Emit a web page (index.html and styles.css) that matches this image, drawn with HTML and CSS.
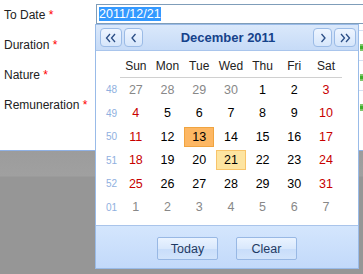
FILE: index.html
```html
<!DOCTYPE html>
<html lang="en">
<head>
  <meta charset="UTF-8" />
  <title>Date picker</title>
  <link rel="stylesheet" href="styles.css">
</head>
<body>

  <!-- form behind the picker -->
  <div class="form">
    <div class="row">
      <label class="lbl">To Date <em>*</em></label>
      <div class="field"><span class="sel">2011/12/21</span></div>
    </div>
    <div class="row">
      <label class="lbl">Duration <em>*</em></label>
      <div class="rest"><i class="plus"></i></div>
    </div>
    <div class="row">
      <label class="lbl">Nature <em>*</em></label>
      <div class="rest"><i class="plus"></i></div>
    </div>
    <div class="row">
      <label class="lbl">Remuneration <em>*</em></label>
      <div class="rest"><i class="plus"></i></div>
    </div>
  </div>
  <div class="mask"></div>

  <!-- calendar popup -->
  <div class="picker">
    <div class="head">
      <button class="nav wide">
        <svg width="12" height="10" viewBox="0 0 12 10"><polyline points="5,1 1.5,5 5,9"/><polyline points="10,1 6.5,5 10,9"/></svg>
      </button>
      <button class="nav">
        <svg width="8" height="10" viewBox="0 0 8 10"><polyline points="5.5,1 2,5 5.5,9"/></svg>
      </button>
      <div class="title">December 2011</div>
      <button class="nav">
        <svg width="8" height="10" viewBox="0 0 8 10"><polyline points="2.5,1 6,5 2.5,9"/></svg>
      </button>
      <button class="nav wide">
        <svg width="12" height="10" viewBox="0 0 12 10"><polyline points="2,1 5.5,5 2,9"/><polyline points="7,1 10.5,5 7,9"/></svg>
      </button>
    </div>

    <div class="days" id="days">
      <span></span>
      <b>Sun</b><b>Mon</b><b>Tue</b><b>Wed</b><b>Thu</b><b>Fri</b><b>Sat</b>
    </div>

    <div class="foot">
      <button class="btn">Today</button>
      <button class="btn">Clear</button>
    </div>
  </div>

  <script>
    // 2011年12月のカレンダー
    const grid = document.getElementById("days");
    const weeks = [
      ["48", 27, 28, 29, 30, 1, 2, 3],
      ["49", 4, 5, 6, 7, 8, 9, 10],
      ["50", 11, 12, 13, 14, 15, 16, 17],
      ["51", 18, 19, 20, 21, 22, 23, 24],
      ["52", 25, 26, 27, 28, 29, 30, 31],
      ["01", 1, 2, 3, 4, 5, 6, 7]
    ];

    weeks.forEach((w, r) => {
      const wk = document.createElement("span");
      wk.className = "wk";
      wk.textContent = w[0];
      grid.appendChild(wk);
      w.slice(1).forEach((d, c) => {
        const el = document.createElement("span");
        el.className = "d";
        el.textContent = d;
        const other = (r === 0 && d > 20) || (r === 5);
        if (other) el.classList.add("other");
        else if (c === 0 || c === 6) el.classList.add("end");
        if (r === 2 && d === 13) el.classList.add("pick");
        if (r === 3 && d === 21) el.classList.add("today");
        grid.appendChild(el);
      });
    });
  </script>
</body>
</html>
```

FILE: styles.css
```css
/*── 全体 ──*/
body {
  margin: 0;
  width: 363px;
  height: 274px;
  overflow: hidden;
  position: relative;
  font-family: "Liberation Sans", Arial, sans-serif;
  font-size: 12px;
  color: #222;
  background: #979797;
}
/*── フォーム ──*/
.form {
  height: 150px;
  background: #fff;
  border-bottom: 1px solid #8fb1e5;
}
.row {
  display: flex;
  height: 30px;
}
.lbl {
  width: 92px;
  padding-left: 4px;
  line-height: 30px;
  flex: none;
}
.lbl em {
  color: #f00;
  font-style: normal;
}
.field {
  flex: 1;
  height: 18px;
  margin-top: 4px;
  border: 1px solid #7f9db9;
  border-right: none;
  padding-left: 2px;
}
.sel {
  display: inline-block;
  margin-top: 2px;
  line-height: 14px;
  font-size: 12.5px;
  color: #fff;
  background: #3399ff;
}
.rest {
  flex: 1;
  display: flex;
  justify-content: flex-end;
  align-items: center;
  border-top: 1px solid #d3e0f2;
}
.plus {
  width: 3px;
  height: 3px;
  margin-top: 4px;
  background: #3fae2a;
  box-shadow: 0 -2px 0 #7cc86a, 0 2px 0 #7cc86a;
}
.mask {
  height: 123px;
  background: linear-gradient(#9c9c9c 0, #a0a0a0 25px, #969696 26px);
}
/*── カレンダー ──*/
.picker {
  position: absolute;
  left: 95px;
  top: 24px;
  width: 262px;
  height: 243px;
  border: 1px solid #99bbe8;
  background: #fff;
  display: flex;
  flex-direction: column;
}
.head {
  height: 25px;
  display: flex;
  align-items: center;
  gap: 2px;
  padding: 0 2px 0 4px;
  background: linear-gradient(#dae8fb, #c6dbf7);
  border-bottom: 1px solid #a9c5ec;
}
.nav {
  width: 19px;
  height: 19px;
  padding: 0;
  border: 1px solid #9bbbe6;
  border-radius: 4px;
  background: linear-gradient(#eef5ff, #d6e6fb);
  display: flex;
  align-items: center;
  justify-content: center;
}
.nav.wide {
  width: 22px;
}
.nav svg polyline {
  fill: none;
  stroke: #2a4d85;
  stroke-width: 1.3;
}
.title {
  flex: 1;
  text-align: center;
  font-weight: bold;
  font-size: 13px;
  color: #15428b;
}
.days {
  flex: 1;
  display: grid;
  grid-template-columns: 24px repeat(7, 31.7px);
  grid-template-rows: 27px repeat(6, 23.5px);
  align-content: start;
}
.days b {
  font-weight: normal;
  text-align: center;
  line-height: 24px;
  padding-top: 3px;
  border-bottom: 1px solid #d0d0d0;
  color: #222;
}
.wk {
  font-size: 10px;
  color: #8fb0e0;
  text-align: right;
  padding-right: 3px;
  align-self: center;
}
.d {
  align-self: center;
  height: 20px;
  line-height: 20px;
  margin: 0 1px;
  text-align: center;
  font-size: 12.5px;
  color: #000;
  box-sizing: border-box;
}
.d.other {
  color: #888;
}
.d.end {
  color: #c80000;
}
.d.pick {
  background: #fdb763;
  border: 1px solid #f0a440;
  line-height: 18px;
}
.d.today {
  background: #fde4a0;
  border: 1px solid #f8c46a;
  line-height: 18px;
}
.foot {
  height: 43px;
  display: flex;
  justify-content: center;
  align-items: flex-start;
  gap: 18px;
  padding-top: 11px;
  box-sizing: border-box;
  border-top: 1px solid #a9c4ea;
  background: linear-gradient(#d4e6fd, #c2d9fa);
}
.btn {
  width: 61px;
  height: 23px;
  padding: 0;
  font-family: "Liberation Sans", Arial, sans-serif;
  font-size: 12.5px;
  color: #1e3a63;
  border: 1px solid #98b8e4;
  border-radius: 2px;
  background: linear-gradient(#eaf3ff, #d9e8fc 50%, #c8ddfa 51%, #d2e4fb);
}
```
